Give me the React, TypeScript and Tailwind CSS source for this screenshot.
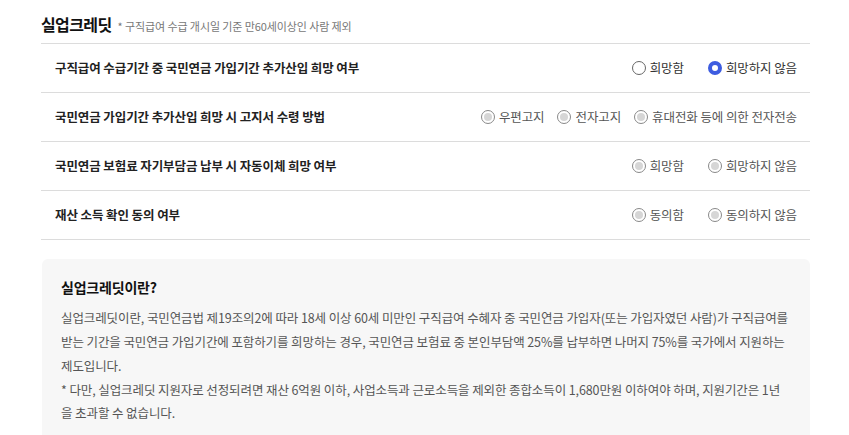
import React from "react";

type Opt = { label: string; state: "off" | "on" | "disabled" };

function Radio({ opt }: { opt: Opt }) {
  return (
    <label className="flex items-center gap-[4px]">
      {opt.state === "on" ? (
        <span className="w-[14px] h-[14px] rounded-full border-[4px] border-[#3d5ce0] bg-white" />
      ) : opt.state === "off" ? (
        <span className="w-[14px] h-[14px] rounded-full border border-[#666] bg-white" />
      ) : (
        <span className="w-[14px] h-[14px] rounded-full border border-[#888] bg-white flex items-center justify-center">
          <span className="w-[8px] h-[8px] rounded-full bg-[#d6d6d6]" />
        </span>
      )}
      <span className={opt.state === "disabled" ? "text-[#555]" : "text-[#333]"}>{opt.label}</span>
    </label>
  );
}

const rows: { q: string; opts: Opt[]; gap: string }[] = [
  { q: "구직급여 수급기간 중 국민연금 가입기간 추가산입 희망 여부", opts: [{ label: "희망함", state: "off" }, { label: "희망하지 않음", state: "on" }], gap: "gap-[24px]" },
  { q: "국민연금 가입기간 추가산입 희망 시 고지서 수령 방법", opts: [{ label: "우편고지", state: "disabled" }, { label: "전자고지", state: "disabled" }, { label: "휴대전화 등에 의한 전자전송", state: "disabled" }], gap: "gap-[13px]" },
  { q: "국민연금 보험료 자기부담금 납부 시 자동이체 희망 여부", opts: [{ label: "희망함", state: "disabled" }, { label: "희망하지 않음", state: "disabled" }], gap: "gap-[24px]" },
  { q: "재산 소득 확인 동의 여부", opts: [{ label: "동의함", state: "disabled" }, { label: "동의하지 않음", state: "disabled" }], gap: "gap-[24px]" },
];

export default function App() {
  return (
    <div className="w-[849px] h-[435px] overflow-hidden bg-white font-['Noto_Sans_CJK_KR',sans-serif] text-[#222]">
      <div className="ml-[41px] w-[769px]">
        <div className="flex items-end gap-[6px] h-[43px] pb-[9px]">
          <h2 className="text-[16px] font-bold leading-[20px] text-[#111] tracking-[-0.6px]">실업크레딧</h2>
          <span className="text-[11px] text-[#777] leading-[16px] tracking-[-0.1px]">* 구직급여 수급 개시일 기준 만60세이상인 사람 제외</span>
        </div>
        <div className="border-t border-[#dcdcdc]">
          {rows.map((r) => (
            <div key={r.q} className="flex items-center justify-between h-[49px] border-b border-[#dcdcdc] pl-[14px] pr-[13px]">
              <span className="text-[12.5px] font-bold text-[#222] tracking-[-0.1px]">{r.q}</span>
              <div className={`flex items-center ${r.gap} text-[12.5px] tracking-[-0.1px]`}>
                {r.opts.map((o) => (
                  <Radio key={o.label} opt={o} />
                ))}
              </div>
            </div>
          ))}
        </div>
        <div className="mt-[19px] ml-[1px] rounded-[6px] bg-[#f7f7f7] px-[19px] pt-[18px] pb-[20px]">
          <h3 className="text-[14px] font-bold text-[#111] leading-[20px] mb-[9px] tracking-[-0.2px]">실업크레딧이란?</h3>
          <p className="text-[12.5px] text-[#555] leading-[24px] tracking-[-0.1px]">
            실업크레딧이란, 국민연금법 제19조의2에 따라 18세 이상 60세 미만인 구직급여 수혜자 중 국민연금 가입자(또는 가입자였던 사람)가 구직급여를 받는 기간을 국민연금 가입기간에 포함하기를 희망하는 경우, 국민연금 보험료 중 본인부담액 25%를 납부하면 나머지 75%를 국가에서 지원하는 제도입니다.
          </p>
          <p className="text-[12.5px] text-[#555] leading-[23px] tracking-[-0.1px]">
            * 다만, 실업크레딧 지원자로 선정되려면 재산 6억원 이하, 사업소득과 근로소득을 제외한 종합소득이 1,680만원 이하여야 하며, 지원기간은 1년을 초과할 수 없습니다.
          </p>
        </div>
      </div>
    </div>
  );
}
